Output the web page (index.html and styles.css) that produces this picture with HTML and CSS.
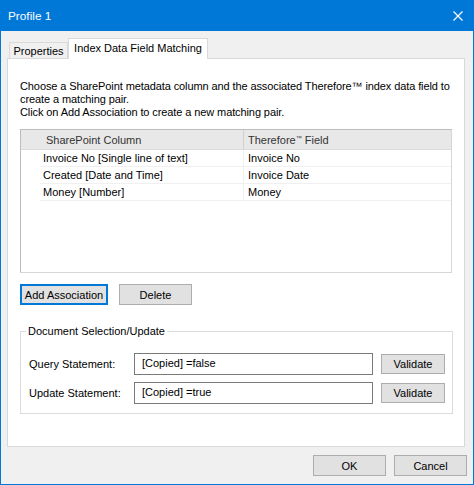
FILE: index.html
```html
<!DOCTYPE html>
<html lang="en">
<head>
    <meta charset="UTF-8">
    <title>Profile 1</title>
    <link rel="stylesheet" href="styles.css">
</head>
<body>
    <div class="window">
        <div class="titlebar">
            <span class="title">Profile 1</span>
            <svg class="close" width="10" height="10" viewBox="0 0 10 10">
                <path d="M0.5 0.5 L9.5 9.5 M9.5 0.5 L0.5 9.5" stroke="#fff" stroke-width="1.2" fill="none"/>
            </svg>
        </div>

        <div class="tabs">
            <div class="tab">Properties</div>
            <div class="tab active">Index Data Field Matching</div>
        </div>

        <div class="panel">
            <p class="intro">Choose a SharePoint metadata column and the associated Therefore™ index data field to create a matching pair.<br>Click on Add Association to create a new matching pair.</p>

            <div class="list">
                <div class="list-row list-head">
                    <div class="col col-sp">SharePoint Column</div>
                    <div class="col col-tf">Therefore<sup class="tm">™</sup> Field</div>
                </div>
                <div class="list-row">
                    <div class="col col-sp">Invoice No [Single line of text]</div>
                    <div class="col col-tf">Invoice No</div>
                </div>
                <div class="list-row">
                    <div class="col col-sp">Created [Date and Time]</div>
                    <div class="col col-tf">Invoice Date</div>
                </div>
                <div class="list-row">
                    <div class="col col-sp">Money [Number]</div>
                    <div class="col col-tf">Money</div>
                </div>
            </div>

            <div class="list-buttons">
                <button class="btn btn-add focused">Add Association</button>
                <button class="btn btn-delete">Delete</button>
            </div>

            <fieldset class="group">
                <legend>Document Selection/Update</legend>
                <div class="field-row">
                    <label class="field-label">Query Statement:</label>
                    <div class="field-input">[Copied] =false</div>
                    <button class="btn btn-validate">Validate</button>
                </div>
                <div class="field-row">
                    <label class="field-label">Update Statement:</label>
                    <div class="field-input">[Copied] =true</div>
                    <button class="btn btn-validate">Validate</button>
                </div>
            </fieldset>
        </div>

        <div class="footer">
            <button class="btn btn-dialog">OK</button>
            <button class="btn btn-dialog">Cancel</button>
        </div>
    </div>
</body>
</html>
```

FILE: styles.css
```css
* {
    box-sizing: border-box;
}
body {
    margin: 0;
    font-family: 'Liberation Sans', Arial, sans-serif;
    font-size: 11px;
    color: #000;
}
.window {
    width: 474px;
    height: 485px;
    border: 1px solid #0078d7;
    background-color: #f0f0f0;
    display: flex;
    flex-direction: column;
}
.titlebar {
    height: 30px;
    background-color: #0078d7;
    color: white;
    display: flex;
    align-items: center;
    justify-content: space-between;
    padding: 0 10px 0 7px;
    font-size: 11.8px;
}
.close {
    display: block;
}

/* Tabs */
.tabs {
    display: flex;
    align-items: flex-end;
    margin-top: 7px;
    padding-left: 8px;
    height: 20px;
}
.tab {
    height: 16px;
    width: 59px;
    border: 1px solid #d9d9d9;
    border-bottom: none;
    line-height: 16px;
    text-align: center;
    background-color: #f0f0f0;
    white-space: nowrap;
}
.tab.active {
    height: 21px;
    width: 140px;
    margin-bottom: -1px;
    background-color: white;
    line-height: 18px;
    position: relative;
    z-index: 1;
}

/* Tab page */
.panel {
    margin: 0 8px 0 6px;
    height: 389px;
    background-color: white;
    border: 1px solid #d9d9d9;
    padding: 21px 12px 0 12px;
}
.intro {
    margin: 0;
    line-height: 13px;
    letter-spacing: -0.1px;
}
.list {
    margin-top: 10px;
    height: 144px;
    border: 1px solid #adadad;
    border-color: #bdbdbd #d6d6d6 #d6d6d6 #bdbdbd;
}
.list-row {
    display: flex;
    height: 17px;
    margin-left: 19px;
    border-bottom: 1px solid #f0f0f0;
    line-height: 16px;
}
.list-head {
    margin-left: 0;
    height: 20px;
    line-height: 20px;
    background-color: #e8e8e8;
    border-bottom: 1px solid #dcdcdc;
    color: #333;
    padding-left: 22px;
}
.col {
    white-space: nowrap;
}
.col-sp {
    width: 204px;
    padding-left: 3px;
    border-right: 1px solid #f0f0f0;
}
.list-head .col-sp {
    width: 201px;
    padding-left: 3px;
    border-right: 1px solid #d0d0d0;
}
.col-tf {
    padding-left: 4px;
}
.tm {
    font-size: 6px;
    vertical-align: 4px;
    line-height: 0;
}

/* Buttons */
.btn {
    font-family: inherit;
    font-size: 11px;
    color: #000;
    background-color: #e1e1e1;
    border: 1px solid #adadad;
    padding: 0;
    height: 21px;
    white-space: nowrap;
}
.btn.focused {
    border: 2px solid #0078d7;
}
.list-buttons {
    display: flex;
    gap: 11px;
    margin-top: 11px;
}
.btn-add {
    width: 88px;
}
.btn-delete {
    width: 73px;
}

/* Group box */
.group {
    margin: 20px 0 0 0;
    height: 89px;
    padding: 16px 7px 0 8px;
    border: 1px solid #dcdcdc;
}
.group legend {
    padding: 0 2px;
    margin-left: -3px;
}
.field-row {
    display: flex;
    align-items: center;
    height: 22px;
    margin-bottom: 7px;
}
.field-label {
    width: 105px;
    white-space: nowrap;
}
.field-input {
    width: 239px;
    height: 22px;
    border: 1px solid #7a7a7a;
    padding: 0 0 0 7px;
    line-height: 18px;
}
.btn-validate {
    width: 64px;
    height: 20px;
    margin-left: 8px;
}

/* Dialog footer */
.footer {
    display: flex;
    justify-content: flex-end;
    gap: 8px;
    padding: 8px 6px 0 0;
}
.btn-dialog {
    width: 73px;
}
```
